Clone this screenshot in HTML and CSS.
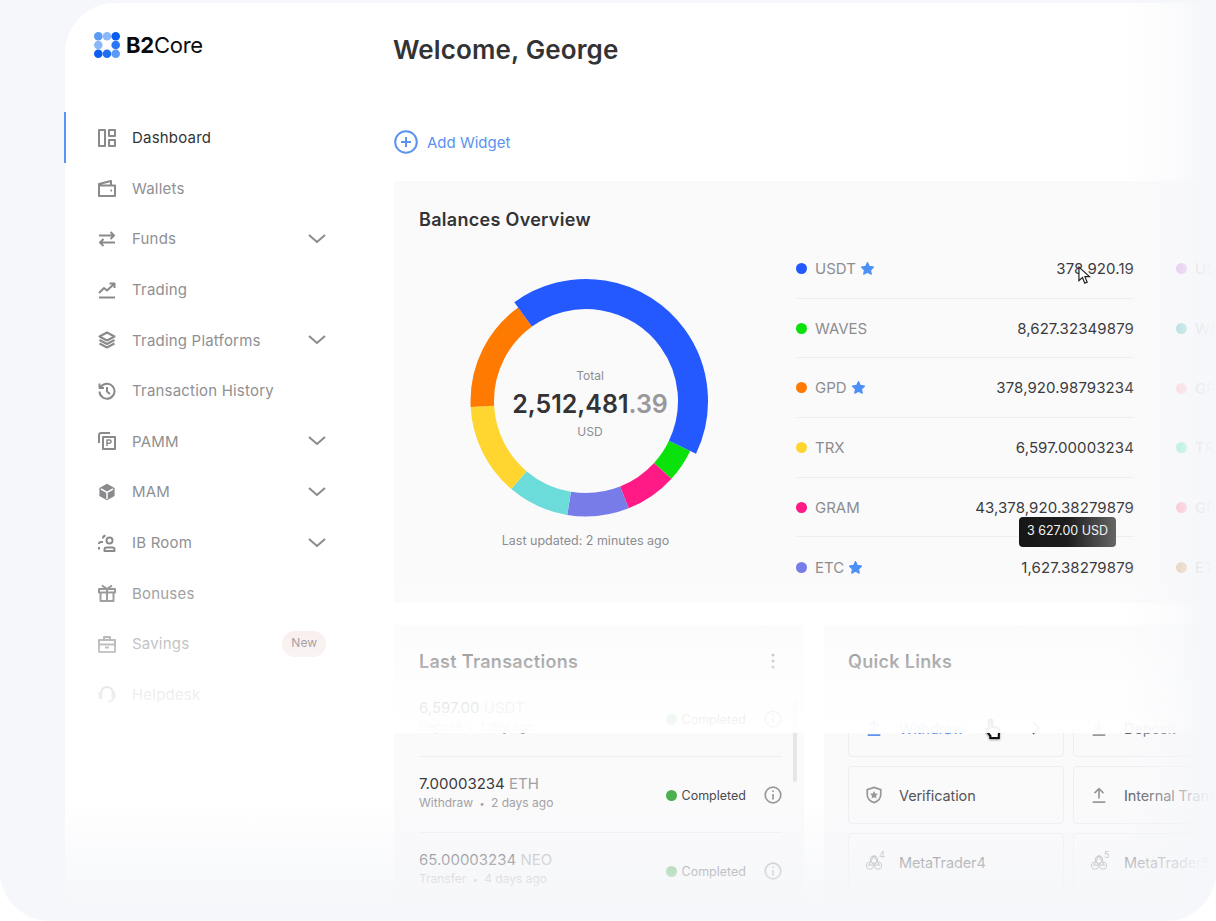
FILE: index.html
```html
<!DOCTYPE html>
<html lang="en">
<head>
<meta charset="utf-8">
<title>B2Core Dashboard</title>
<link rel="stylesheet" href="styles.css">
</head>
<body>
<div class="stage">
  <div class="app">
    <aside class="sidebar">
      <div class="logo">
        <svg class="logo-mark" viewBox="0 0 26 26" width="26" height="26">
          <circle cx="4.300" cy="4.300" r="4.300" fill="#5b9bf8"/><circle cx="13" cy="4.300" r="4.300" fill="#8ab8fa"/><circle cx="21.700" cy="4.300" r="4.300" fill="#0a5ff0"/>
          <circle cx="4.300" cy="13" r="4.300" fill="#8ab8fa"/><circle cx="21.700" cy="13" r="4.300" fill="#2a78f4"/>
          <circle cx="4.300" cy="21.700" r="4.300" fill="#0a5ff0"/><circle cx="13" cy="21.700" r="4.300" fill="#1f6ff3"/><circle cx="21.700" cy="21.700" r="4.300" fill="#5b9bf8"/>
        </svg>
        <span class="logo-text"><b>B2</b>Core</span>
      </div>
      <nav class="nav">
        <a class="nav-item active">
          <svg class="nav-ico" viewBox="0 0 18 18"><path d="M1 1h6v16H1zM11 1h6v6h-6zM11 11h6v6h-6z"/></svg>
          <span class="nav-label">Dashboard</span>
        </a>
        <a class="nav-item">
          <svg class="nav-ico" viewBox="0 0 18 18"><path d="M1 6.500h16V17H1zM1 6.500V5l12-3v4.500"/><path d="M12.500 11.500h1.500"/></svg>
          <span class="nav-label">Wallets</span>
        </a>
        <a class="nav-item">
          <svg class="nav-ico" viewBox="0 0 18 18"><path d="M1 5.500h15M12.500 2l3.500 3.500L12.500 9M17 12.500H2M5.500 9L2 12.500 5.500 16"/></svg>
          <span class="nav-label">Funds</span>
          <svg class="chev" viewBox="0 0 18 10"><path d="M1 1l8 7 8-7"/></svg>
        </a>
        <a class="nav-item">
          <svg class="nav-ico" viewBox="0 0 18 18"><path d="M1 12l5-5 3 2.500L16 3M11.500 2.500H16.500V7M1 16.500h16"/></svg>
          <span class="nav-label">Trading</span>
        </a>
        <a class="nav-item">
          <svg class="nav-ico" viewBox="0 0 18 18"><path d="M9 1.500L16.500 5.500 9 9.500 1.500 5.500zM1.500 9L9 13l7.500-4M1.500 12.500L9 16.500l7.500-4"/></svg>
          <span class="nav-label">Trading Platforms</span>
          <svg class="chev" viewBox="0 0 18 10"><path d="M1 1l8 7 8-7"/></svg>
        </a>
        <a class="nav-item">
          <svg class="nav-ico" viewBox="0 0 18 18"><path d="M2.500 5.500A7.500 7.500 0 1 1 1.500 9.500M1.500 1.500v4.500H6M9 5v4.500l3 2.500"/></svg>
          <span class="nav-label">Transaction History</span>
        </a>
        <a class="nav-item">
          <svg class="nav-ico" viewBox="0 0 18 18"><path d="M1 11V3a2 2 0 0 1 2-2h9"/><path d="M5 5h12v12H5z"/><path class="thin" d="M9 14V8h2.500a1.500 1.500 0 0 1 0 3.200H9"/></svg>
          <span class="nav-label">PAMM</span>
          <svg class="chev" viewBox="0 0 18 10"><path d="M1 1l8 7 8-7"/></svg>
        </a>
        <a class="nav-item">
          <svg class="nav-ico" viewBox="0 0 18 18"><path class="solid" d="M9 .7l7.600 4.200v8.200L9 17.300 1.400 13.100V4.900z"/><path class="knock" d="M3 6l6 3.300L15 6M9 9.300V16"/></svg>
          <span class="nav-label">MAM</span>
          <svg class="chev" viewBox="0 0 18 10"><path d="M1 1l8 7 8-7"/></svg>
        </a>
        <a class="nav-item">
          <svg class="nav-ico" viewBox="0 0 18 18"><circle cx="11.500" cy="6.500" r="3"/><path d="M6.500 17v-1.500a2 2 0 0 1 2-2h6a2 2 0 0 1 2 2V17zM7.500 1.500a3 3 0 0 0-2.500 3M5 8H3a2 2 0 0 0-2 2M1 15.500V13"/></svg>
          <span class="nav-label">IB Room</span>
          <svg class="chev" viewBox="0 0 18 10"><path d="M1 1l8 7 8-7"/></svg>
        </a>
        <a class="nav-item">
          <svg class="nav-ico" viewBox="0 0 18 18"><path d="M1 5h16v3.500H1zM2.500 8.500V17h13V8.500M9 5v12M4 1.500L9 5l5-3.500"/></svg>
          <span class="nav-label">Bonuses</span>
        </a>
        <a class="nav-item">
          <svg class="nav-ico" viewBox="0 0 18 18"><path d="M1 5h16v12H1zM1 9.500h16M6 5V2h6v3M7 12.500h4"/></svg>
          <span class="nav-label">Savings</span>
          <span class="badge">New</span>
        </a>
        <a class="nav-item">
          <svg class="nav-ico" viewBox="0 0 18 18"><path d="M3 11V8a6 6 0 0 1 12 0v3M1.500 8h2v5h-2zM14.500 8h2v5h-2zM15 13c0 2.500-2 3.500-5 3.500"/></svg>
          <span class="nav-label">Helpdesk</span>
        </a>
      </nav>
    </aside>

    <main class="main">
      <h1 class="title">Welcome, George</h1>
      <a class="add">
        <svg class="add-ico" viewBox="0 0 24 24"><circle cx="12" cy="12" r="10.800"/><path d="M12 7v10M7 12h10"/></svg>
        <span>Add Widget</span>
      </a>

      <section class="card balances">
        <h2 class="card-title">Balances Overview</h2>
        <div class="bal-body">
          <div class="donut-col">
            <div class="donut">
              <svg class="donut-svg" viewBox="0 0 246 246" width="246" height="246">
                <g class="ring" transform="rotate(-90 123 123)">
                  <circle cx="123" cy="123" r="103.750" pathLength="360" stroke="#0be20b" stroke-dasharray="16.700 360" stroke-dashoffset="-115.600"/>
                  <circle cx="123" cy="123" r="103.750" pathLength="360" stroke="#ff1a86" stroke-dasharray="26 360" stroke-dashoffset="-132.300"/>
                  <circle cx="123" cy="123" r="103.750" pathLength="360" stroke="#787ce8" stroke-dasharray="31.100 360" stroke-dashoffset="-158.300"/>
                  <circle cx="123" cy="123" r="103.750" pathLength="360" stroke="#6cdcda" stroke-dasharray="30.900 360" stroke-dashoffset="-189.400"/>
                  <circle cx="123" cy="123" r="103.750" pathLength="360" stroke="#ffd530" stroke-dasharray="46.600 360" stroke-dashoffset="-220.300"/>
                  <circle cx="123" cy="123" r="103.750" pathLength="360" stroke="#ff7a00" stroke-dasharray="57.100 360" stroke-dashoffset="-266.900"/>
                  <circle class="ring-blue" cx="123" cy="123" r="107" pathLength="360" stroke="#2459ff" stroke-dasharray="151.600 360" transform="rotate(324 123 123)"/>
                </g>
              </svg>
              <div class="donut-center">
                <div class="d-small">Total</div>
                <div class="d-total">2,512,481<span class="d-cents">.39</span></div>
                <div class="d-small">USD</div>
              </div>
            </div>
            <div class="updated">Last updated: 2 minutes ago</div>
          </div>
          <div class="bal-cols">
            <ul class="bal-list">
              <li class="bal-row"><i class="dot-c c-usdt"></i><span class="sym">USDT</span><svg class="star" viewBox="0 0 20 20"><path d="M10 2l2.500 5.200 5.600.8-4 4 .9 5.600L10 15l-5 2.600.9-5.600-4-4 5.600-.8z"/></svg><span class="val">378,920.19</span></li>
              <li class="bal-row"><i class="dot-c c-waves"></i><span class="sym">WAVES</span><span class="val">8,627.32349879</span></li>
              <li class="bal-row"><i class="dot-c c-gpd"></i><span class="sym">GPD</span><svg class="star" viewBox="0 0 20 20"><path d="M10 2l2.500 5.200 5.600.8-4 4 .9 5.600L10 15l-5 2.600.9-5.600-4-4 5.600-.8z"/></svg><span class="val">378,920.98793234</span></li>
              <li class="bal-row"><i class="dot-c c-trx"></i><span class="sym">TRX</span><span class="val">6,597.00003234</span></li>
              <li class="bal-row"><i class="dot-c c-gram"></i><span class="sym">GRAM</span><span class="val">43,378,920.38279879</span></li>
              <li class="bal-row"><i class="dot-c c-etc"></i><span class="sym">ETC</span><svg class="star" viewBox="0 0 20 20"><path d="M10 2l2.500 5.200 5.600.8-4 4 .9 5.600L10 15l-5 2.600.9-5.600-4-4 5.600-.8z"/></svg><span class="val">1,627.38279879</span></li>
            </ul>
            <ul class="bal-list ghost">
              <li class="bal-row"><i class="dot-c g1"></i><span class="sym">USDT</span></li>
              <li class="bal-row"><i class="dot-c g2"></i><span class="sym">WAVES</span></li>
              <li class="bal-row"><i class="dot-c g3"></i><span class="sym">GPD</span></li>
              <li class="bal-row"><i class="dot-c g4"></i><span class="sym">TRX</span></li>
              <li class="bal-row"><i class="dot-c g5"></i><span class="sym">GRAM</span></li>
              <li class="bal-row"><i class="dot-c g6"></i><span class="sym">ETC</span></li>
            </ul>
          </div>
        </div>
      </section>

      <div class="lower">
        <section class="card tx">
          <div class="tx-head">
            <h2 class="card-title">Last Transactions</h2>
            <svg class="more" viewBox="0 0 4 16"><circle cx="2" cy="2" r="1.500"/><circle cx="2" cy="8" r="1.500"/><circle cx="2" cy="14" r="1.500"/></svg>
          </div>
          <div class="tx-list">
            <div class="tx-row">
              <div class="tx-left"><div class="tx-amt">6,597.00 <span class="cur">USDT</span></div><div class="tx-sub">Deposit <i>•</i> 1 day ago</div></div>
              <div class="tx-status"><i class="ok"></i>Completed</div>
              <svg class="info" viewBox="0 0 18 18"><circle cx="9" cy="9" r="7.800"/><path d="M9 8v5.500M9 4.500v1.500"/></svg>
            </div>
            <div class="tx-row">
              <div class="tx-left"><div class="tx-amt">7.00003234 <span class="cur">ETH</span></div><div class="tx-sub">Withdraw <i>•</i> 2 days ago</div></div>
              <div class="tx-status"><i class="ok"></i>Completed</div>
              <svg class="info" viewBox="0 0 18 18"><circle cx="9" cy="9" r="7.800"/><path d="M9 8v5.500M9 4.500v1.500"/></svg>
            </div>
            <div class="tx-row">
              <div class="tx-left"><div class="tx-amt">65.00003234 <span class="cur">NEO</span></div><div class="tx-sub">Transfer <i>•</i> 4 days ago</div></div>
              <div class="tx-status"><i class="ok"></i>Completed</div>
              <svg class="info" viewBox="0 0 18 18"><circle cx="9" cy="9" r="7.800"/><path d="M9 8v5.500M9 4.500v1.500"/></svg>
            </div>
            <div class="tx-row">
              <div class="tx-left"><div class="tx-amt">78.48168049 <span class="cur">DAI</span></div><div class="tx-sub">Deposit <i>•</i> 5 days ago</div></div>
            </div>
          </div>
          <div class="scrollbar"></div>
        </section>
        <section class="card links">
          <h2 class="card-title">Quick Links</h2>
          <div class="links-grid">
            <a class="link link-blue"><svg class="link-ico" viewBox="0 0 20 20"><path d="M3 18h14M10 14V3M5 8l5-5 5 5"/></svg><span>Withdraw</span><svg class="link-chev" viewBox="0 0 8 14"><path d="M1 1l6 6-6 6"/></svg></a>
            <a class="link"><svg class="link-ico" viewBox="0 0 20 20"><path d="M3 18h14M10 2v11M5 8l5 5 5-5"/></svg><span>Deposit</span></a>
            <a class="link"><svg class="link-ico" viewBox="0 0 20 20"><path d="M10 1.500l7.500 2.500v5.500c0 4.500-3 7.500-7.500 9-4.500-1.500-7.500-4.500-7.500-9V4z"/><path class="solid2" d="M10 5.500l1.400 2.800 3.100.4-2.300 2.200.6 3.100-2.800-1.500-2.800 1.500.6-3.100-2.300-2.200 3.100-.4z"/></svg><span>Verification</span></a>
            <a class="link"><svg class="link-ico" viewBox="0 0 20 20"><path d="M3 18h14M10 14V3M5 8l5-5 5 5"/></svg><span>Internal Transfer</span></a>
            <a class="link"><svg class="link-ico ico-mt" viewBox="0 0 20 20"><path d="M10 3l6 10.500H4z"/><circle cx="10" cy="7.500" r="4"/><circle cx="5.500" cy="14" r="4"/><circle cx="14.500" cy="14" r="4"/></svg><sup class="mt">4</sup><span>MetaTrader4</span></a>
            <a class="link"><svg class="link-ico ico-mt" viewBox="0 0 20 20"><path d="M10 3l6 10.500H4z"/><circle cx="10" cy="7.500" r="4"/><circle cx="5.500" cy="14" r="4"/><circle cx="14.500" cy="14" r="4"/></svg><sup class="mt">5</sup><span>MetaTrader5</span></a>
          </div>
        </section>
      </div>
    </main>
  </div>

  <div class="tooltip">3 627.00 USD</div>
  <svg class="cursor cursor-arrow" viewBox="0 0 14 20"><path d="M1 1v14.500l3.800-3.300 2.500 6 2.600-1.100-2.500-5.900h5z"/></svg>
  <svg class="cursor cursor-hand" viewBox="0 0 16 20"><path d="M5 9V2.500a1.300 1.300 0 0 1 2.600 0V8l5 1c1.300.3 1.900 1.200 1.800 2.400l-.5 4.600v2.500H6v-2L2 11.500c-.8-1.300.8-2.500 1.900-1.500z"/></svg>

  <div class="fade fade-top"></div>
  <div class="fade fade-bottom"></div>
  <div class="fade fade-right"></div>
</div>
</body>
</html>
```

FILE: styles.css
```css
* { box-sizing: border-box; }
html, body { margin: 0; padding: 0; }
body {
  width: 1216px;
  height: 921px;
  overflow: hidden;
  background: #fff;
  font-family: "Inter", "Noto Sans", "Liberation Sans", sans-serif;
}
.stage {
  position: relative;
  width: 1216px;
  height: 921px;
  overflow: hidden;
  background: #f6f7fa;
  border-radius: 0 0 50px 50px;
}
.app {
  display: flex;
  width: 1220px;
  height: 1000px;
  margin: 3px 0 0 65px;
  background: #fff;
  border-top-left-radius: 50px;
}

/* Sidebar */
.sidebar { width: 329px; flex: none; }
.logo {
  display: flex;
  align-items: flex-start;
  gap: 6px;
  padding: 29px 0 0 29px;
  height: 109px;
}
.logo-mark { flex: none; }
.logo-text { font-size: 22px; line-height: 26px; color: #0b0b0d; letter-spacing: -0.25px; }
.logo-text b { font-weight: 700; }
.nav { display: flex; flex-direction: column; }
.nav-item {
  display: flex;
  align-items: center;
  height: 50.6px;
  padding: 1px 68px 0 32px;
  color: #909093;
  font-size: 15px;
  letter-spacing: .2px;
  border-left: 2px solid transparent;
  margin-left: -1px;
}
.nav-item.active { border-left-color: #5b93ee; color: #333336; }
.nav-ico {
  width: 18px; height: 18px; flex: none; margin-right: 16px;
  fill: none; stroke: #8a8a8d; stroke-width: 2;
  stroke-linejoin: round;
}
.nav-ico .solid { fill: #8a8a8d; stroke: none; }
.nav-ico .knock { stroke: #fff; stroke-width: 1.500; }
.nav-ico .thin { stroke-width: 1.500; }
.nav-label { flex: 1; white-space: nowrap; }
.chev { width: 18px; height: 10px; fill: none; stroke: #8a8a8d; stroke-width: 2; flex: none; }
.badge {
  background: #f6e5e5;
  color: #55555a;
  font-size: 12px;
  letter-spacing: 0;
  height: 26px;
  line-height: 24px;
  padding: 0 9px;
  border-radius: 13px;
}

/* Main */
.main { width: 850px; flex: none; }
.title {
  margin: 29px 0 0 -1px;
  font-size: 26px;
  line-height: 36px;
  font-weight: 600;
  letter-spacing: .13px;
  color: #333336;
}
.add {
  display: flex;
  align-items: center;
  gap: 9px;
  margin-top: 62px;
  height: 24px;
  color: #5b93ee;
  font-size: 15px;
}
.add-ico { width: 24px; height: 24px; fill: none; stroke: #5b93ee; stroke-width: 2; }
.card { background: #fafafb; }
.balances {
  margin-top: 27px;
  height: 422px;
  padding: 27px 0 0 25px;
  overflow: hidden;
}
.card-title {
  margin: 0;
  font-size: 18px;
  line-height: 24px;
  font-weight: 600;
  letter-spacing: .3px;
  color: #333336;
}
.bal-body { display: flex; margin-top: 7px; }
.donut-col { width: 377px; flex: none; padding: 39px 0 0 43.500px; }
.donut { position: relative; width: 246px; height: 246px; }
.donut-svg { display: block; }
.ring circle { fill: none; stroke-width: 23.500; }
.ring .ring-blue { stroke-width: 30; }
.donut-center {
  position: absolute;
  inset: 0;
  padding: 6px 0 0 9px;
  display: flex;
  flex-direction: column;
  align-items: center;
  justify-content: center;
}
.d-small { font-size: 12px; line-height: 16px; color: #8d8d90; }
.d-total { font-size: 25px; line-height: 40px; font-weight: 600; color: #333336; }
.d-cents { color: #98989b; }
.updated { margin-top: 9px; width: 246px; text-align: center; font-size: 12.500px; line-height: 16px; color: #8d8d90; }
.bal-cols { display: flex; gap: 42px; }
.bal-list { list-style: none; margin: 0; padding: 0; width: 338px; flex: none; }
.bal-list.ghost { width: 200px; }
.bal-row {
  display: flex;
  align-items: center;
  height: 59.700px;
  font-size: 15px;
  color: #8d8d90;
  border-bottom: 1px solid #eeeef0;
}
.bal-row:last-child { border-bottom: 0; }
.ghost .bal-row { border-bottom: 0; }
.dot-c { width: 11px; height: 11px; border-radius: 50%; margin-right: 8px; flex: none; }
.c-usdt { background: #2459ff; }
.c-waves { background: #0be20b; }
.c-gpd { background: #ff7a00; }
.c-trx { background: #ffd530; }
.c-gram { background: #ff1a86; }
.c-etc { background: #787ce8; }
.g1 { background: #d9a8e6; }
.g2 { background: #7fcccc; }
.g3 { background: #ffc6d2; }
.g4 { background: #7eeec8; }
.g5 { background: #ff9fb3; }
.g6 { background: #dcb38c; }
.sym { white-space: nowrap; }
.star {
  width: 15px; height: 15px; margin-left: 4px; flex: none;
  fill: #4d90f5; stroke: #4d90f5; stroke-width: 1.500; stroke-linejoin: round;
}
.val { margin-left: auto; color: #3a3a3e; white-space: nowrap; letter-spacing: .1px; }

.lower { display: flex; gap: 20px; margin-top: 22px; }
.tx { width: 410px; height: 340px; flex: none; padding: 25px 22px 0 25px; position: relative; overflow: hidden; }
.tx-head { display: flex; justify-content: space-between; align-items: center; padding-right: 7px; }
.more { width: 4px; height: 16px; fill: #8d8d90; margin-top: -2px; }
.tx-list { margin-top: 7px; }
.tx-row {
  display: flex;
  align-items: center;
  height: 76px;
  border-bottom: 1px solid #eeeef0;
}
.tx-left { flex: 1; margin-top: -1px; }
.tx-amt { font-size: 15px; line-height: 19px; color: #3a3a3e; }
.cur { color: #a0a0a3; }
.tx-sub { font-size: 12px; line-height: 20px; color: #a0a0a3; }
.tx-sub i { font-style: normal; margin: 0 3px; font-size: 9px; }
.tx-status { display: flex; align-items: center; gap: 5px; font-size: 12.500px; color: #4a4a4f; margin: 1px 18px 0 0; }
.ok { width: 11px; height: 11px; border-radius: 50%; background: #4caf50; display: block; }
.info { width: 18px; height: 18px; fill: none; stroke: #98989b; stroke-width: 1.700; flex: none; }
.scrollbar { position: absolute; right: 7px; top: 75px; width: 4px; height: 82px; background: #e6e6e8; border-radius: 2px; }
.links { flex: 1; padding: 25px 0 0 24px; height: 340px; overflow: hidden; }
.links-grid {
  display: grid;
  grid-template-columns: 216px 216px;
  grid-auto-rows: 58px;
  gap: 9px;
  margin-top: 25px;
}
.link {
  display: flex;
  align-items: center;
  border: 1px solid #eeeef0;
  border-radius: 4px;
  padding: 0 16px;
  font-size: 14.500px;
  letter-spacing: -.1px;
  color: #55555a;
  white-space: nowrap;
  overflow: hidden;
  position: relative;
}
.link-ico { width: 18px; height: 18px; flex: none; margin-right: 16px; fill: none; stroke: #98989b; stroke-width: 1.900; }
.link-ico.ico-mt { stroke-width: 1.300; }
.link-ico .solid2 { fill: #98989b; stroke: none; }
.link-blue { color: #5b93ee; }
.link-blue .link-ico { stroke: #5b93ee; }
.link-chev { width: 8px; height: 14px; margin: 0 7px 0 auto; fill: none; stroke: #55555a; stroke-width: 1.500; flex: none; }
.mt { position: absolute; left: 30px; top: 16px; font-size: 9px; line-height: 10px; color: #98989b; }

/* Overlays */
.tooltip {
  position: absolute;
  left: 1019px;
  top: 517px;
  width: 97px;
  height: 30px;
  line-height: 28px;
  text-align: center;
  border-radius: 4px;
  font-size: 12.500px;
  color: #f2f2f2;
  background: linear-gradient(90deg, #161616 0%, #1d1d1d 50%, #666 100%);
}
.cursor { position: absolute; }
.cursor-arrow { left: 1078px; top: 266px; width: 13px; height: 19px; fill: #fff; stroke: #222; stroke-width: 1.300; }
.cursor-hand { left: 984px; top: 718px; width: 17px; height: 22px; fill: #fff; stroke: #111; stroke-width: 2; filter: drop-shadow(0 1px 1px rgba(0,0,0,.4)); }
.fade { position: absolute; pointer-events: none; }
.fade-top {
  left: 65px;
  top: 570px;
  width: 1151px;
  height: 163px;
  background: linear-gradient(180deg, rgba(255,255,255,0) 0%, rgba(255,255,255,.45) 45%, rgba(255,255,255,.85) 76%, rgba(255,255,255,.96) 100%);
}
.fade-bottom {
  left: 0;
  top: 733px;
  width: 1216px;
  height: 188px;
  background: linear-gradient(180deg, rgba(246,247,250,0) 36%, rgba(246,247,250,.6) 68%, #f6f7fa 97%);
}
.fade-right {
  left: 1120px;
  top: 0;
  width: 96px;
  height: 921px;
  background: linear-gradient(90deg, rgba(246,247,250,0) 0%, rgba(246,247,250,.5) 58%, rgba(246,247,250,.85) 79%, #f6f7fa 100%);
}
```
